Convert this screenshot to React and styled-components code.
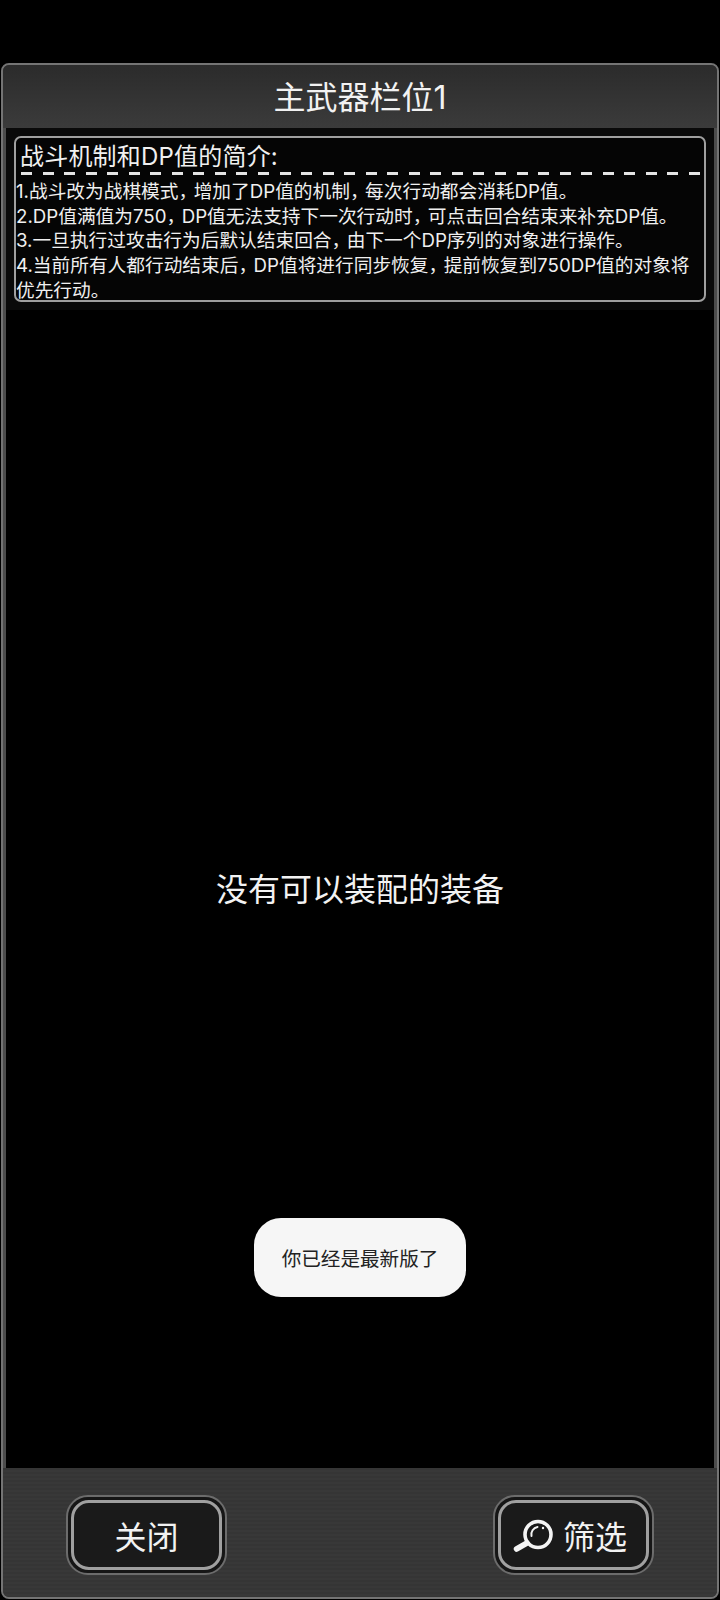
import React from 'react';
import styled, { createGlobalStyle } from 'styled-components';

const GlobalStyle = createGlobalStyle`
  html, body {
    margin: 0;
    padding: 0;
    background: #000;
  }
  body {
    font-family: 'Inter', 'Noto Sans CJK SC', sans-serif;
  }
`;

const Screen = styled.div`
  width: 720px;
  height: 1600px;
  padding: 63px 1px 1px;
  box-sizing: border-box;
  background: #000;
  position: relative;
  overflow: hidden;
`;

const Panel = styled.div`
  height: 100%;
  box-sizing: border-box;
  display: flex;
  flex-direction: column;
  border: 2px solid #747474;
  border-radius: 8px;
  background: #373737;
  overflow: hidden;
`;

const Header = styled.div`
  height: 63px;
  flex: none;
  box-sizing: border-box;
  padding-bottom: 4px;
  display: flex;
  align-items: center;
  justify-content: center;
  background: linear-gradient(#2b2b2b, #3b3b3b);
  color: #f2f2f2;
  font-size: 32px;
`;

const Body = styled.div`
  flex: 1;
  display: flex;
  flex-direction: column;
  border-left: 3px solid #4c4c4c;
  border-right: 3px solid #4c4c4c;
  background: #000;
`;

const InfoWrap = styled.div`
  flex: none;
  padding: 8px;
  background: #0a0a0a;
`;

const InfoBox = styled.div`
  height: 166px;
  box-sizing: border-box;
  border: 2px solid #a0a0a0;
  border-radius: 7px;
  background: #050505;
  color: #f0f0f0;
  overflow: hidden;
`;

const InfoTitle = styled.div`
  margin: 0 0 0 4px;
  padding-top: 2px;
  height: 32px;
  font-size: 24px;
  line-height: 33px;
  letter-spacing: 0.2px;
`;

const DashRow = styled.div`
  display: flex;
  justify-content: space-between;
  margin: 0 4px 5px 5px;
`;

const Dash = styled.span`
  width: 11px;
  height: 3px;
  background: #e4e4e4;
`;

const InfoLine = styled.div`
  font-size: 18.7px;
  line-height: 24.7px;
  white-space: nowrap;
`;

const Comma = styled.span`
  letter-spacing: -3.5px;
`;

const Empty = styled.div`
  flex: 1;
  display: flex;
  align-items: center;
  justify-content: center;
  color: #f2f2f2;
  font-size: 32px;
  padding-bottom: 5px;
`;

const Footer = styled.div`
  height: 129px;
  flex: none;
  display: flex;
  justify-content: space-between;
  padding: 27px 63px 0;
  box-sizing: border-box;
  background: repeating-linear-gradient(#353535 0 2px, #383838 2px 4px);
`;

const ButtonFrame = styled.div`
  width: 161px;
  height: 80px;
  box-sizing: border-box;
  padding: 3px;
  border: 2px solid #6c6c6c;
  border-radius: 22px;
  background: #161616;
`;

const Button = styled.button`
  width: 100%;
  height: 100%;
  box-sizing: border-box;
  display: flex;
  align-items: center;
  justify-content: center;
  gap: 10px;
  padding: 0 ${props => (props.$icon ? 7 : 0)}px 0 0;
  border: 3px solid #a0a0a0;
  border-radius: 18px;
  background: #1a1a1a;
  color: #f2f2f2;
  font-family: inherit;
  font-size: 32px;
`;

const Toast = styled.div`
  position: absolute;
  left: 254px;
  top: 1218px;
  width: 212px;
  height: 79px;
  display: flex;
  align-items: center;
  justify-content: center;
  border-radius: 27px;
  background: #f6f6f6;
  color: #222;
  font-size: 19.6px;
`;

const SearchIcon = () => (
  <svg width="40" height="33" viewBox="0 0 40 33" fill="none">
    <circle cx="25" cy="15.5" r="13" stroke="#f4f4f4" strokeWidth="3.6" />
    <path d="M18.5 17a7.5 7.5 0 0 1 6-9" stroke="#f4f4f4" strokeWidth="2" strokeLinecap="round" />
    <circle cx="30" cy="9" r="1.2" fill="#f4f4f4" />
    <path d="M14 24L3.5 30" stroke="#f4f4f4" strokeWidth="5.5" strokeLinecap="round" />
  </svg>
);

const rules = [
  ['1.战斗改为战棋模式', '增加了DP值的机制', '每次行动都会消耗DP值。'],
  ['2.DP值满值为750', 'DP值无法支持下一次行动时', '可点击回合结束来补充DP值。'],
  ['3.一旦执行过攻击行为后默认结束回合', '由下一个DP序列的对象进行操作。'],
  ['4.当前所有人都行动结束后', 'DP值将进行同步恢复', '提前恢复到750DP值的对象将'],
  ['优先行动。'],
];

const App = () => (
  <Screen>
    <GlobalStyle />
    <Panel>
      <Header>主武器栏位1</Header>
      <Body>
        <InfoWrap>
          <InfoBox>
            <InfoTitle>战斗机制和DP值的简介:</InfoTitle>
            <DashRow>
              {Array.from({ length: 32 }, (_, i) => (
                <Dash key={i} />
              ))}
            </DashRow>
            {rules.map(parts => (
              <InfoLine key={parts[0]}>
                {parts.map((part, i) => (
                  <React.Fragment key={part}>
                    {part}
                    {i < parts.length - 1 && <Comma>，</Comma>}
                  </React.Fragment>
                ))}
              </InfoLine>
            ))}
          </InfoBox>
        </InfoWrap>
        <Empty>没有可以装配的装备</Empty>
      </Body>
      <Footer>
        <ButtonFrame>
          <Button>关闭</Button>
        </ButtonFrame>
        <ButtonFrame>
          <Button $icon>
            <SearchIcon />
            筛选
          </Button>
        </ButtonFrame>
      </Footer>
    </Panel>
    <Toast>你已经是最新版了</Toast>
  </Screen>
);

export default App;
